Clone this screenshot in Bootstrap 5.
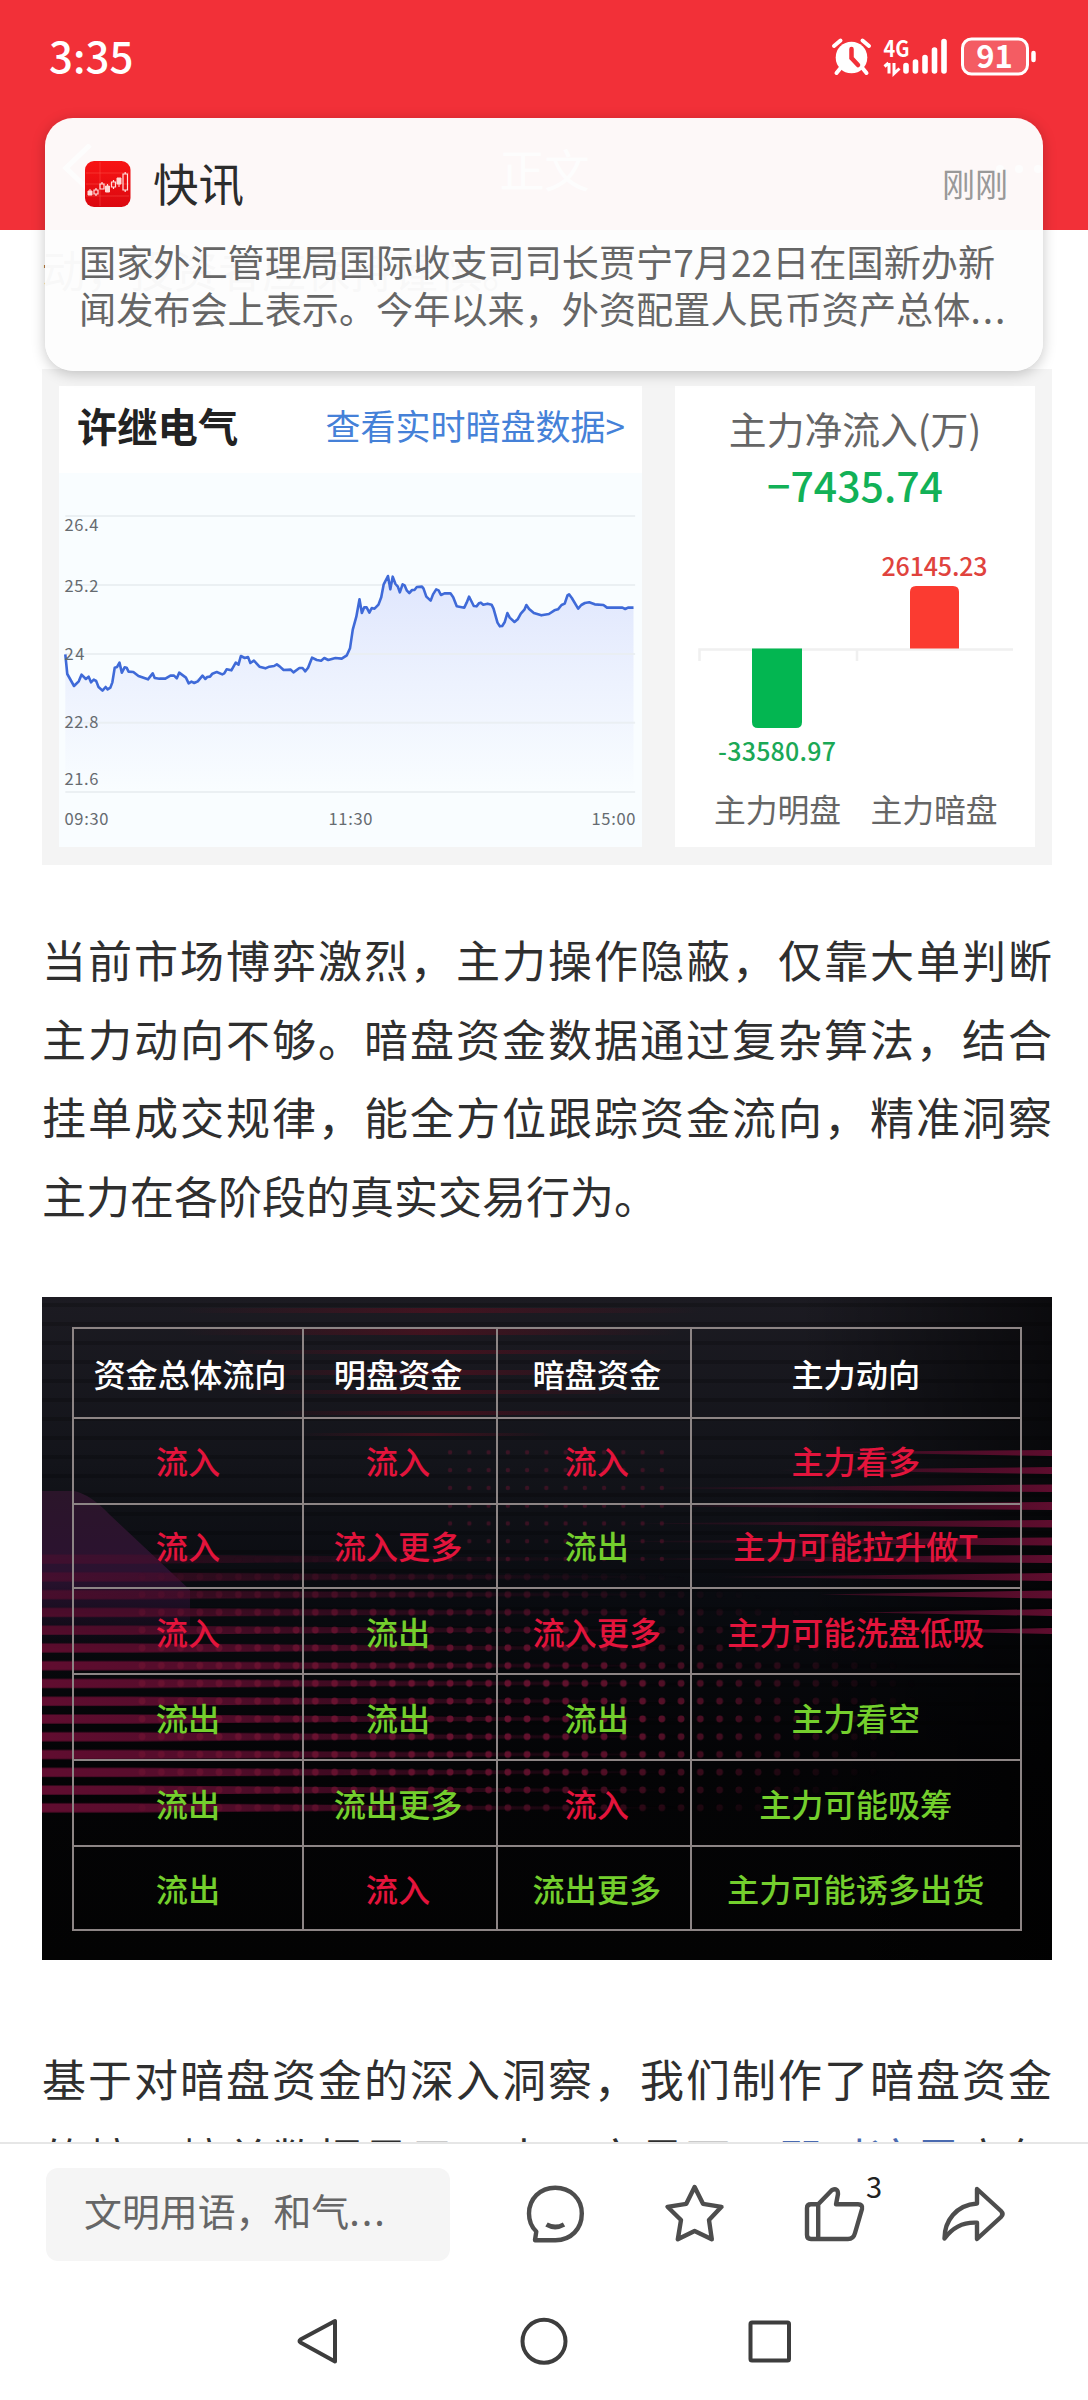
<!DOCTYPE html>
<html lang="zh-CN">
<head>
<meta charset="utf-8">
<meta name="viewport" content="width=device-width, initial-scale=1">
<title>正文</title>
<link rel="stylesheet" href="https://cdn.jsdelivr.net/npm/bootstrap@5.3.0/dist/css/bootstrap.min.css">
<script src="https://cdn.jsdelivr.net/npm/bootstrap@5.3.0/dist/js/bootstrap.bundle.min.js"></script>
<style>
body{font-family:"Noto Sans CJK SC",sans-serif;color:#333;background:#fff;margin:0}
.phone{width:1088px;height:2400px}
.topbar{height:230px;background:#f23038;color:#fff}
.status{height:115px;padding:0 51px 0 49px}
.clock{font-size:42px;font-weight:500;line-height:48px;padding-bottom:6px}
.titlebar{height:107px;padding:0 45px 0 60px}
.titlebar h1{font-size:45px;font-weight:400;line-height:50px;margin:0}
.notice{top:118px;left:45px;width:998px;height:253px;border-radius:28px;background:rgba(253,253,253,.975);box-shadow:0 3px 14px rgba(0,0,0,.22);padding:42px 35px 0 37px;z-index:5}
.notice-app{font-size:45.5px;line-height:48px;color:#2c2c2c;margin:-2px 0 2px 19px}
.notice-time{font-size:33px;line-height:40px;color:#999;margin-top:-3px}
.notice-text{font-size:37.15px;line-height:47px;color:#666;margin:30px 0 0 -3px;white-space:nowrap}
.dots3{letter-spacing:2px}
.article{height:1912px;padding:0 36px 0 42px}
.article p{font-size:44px;line-height:78.5px;text-align:justify;color:#2f2f2f;margin:0}
.article .lead-in{height:139px}
.stock{background:#f4f4f4;height:496px;padding:17px 17px 18px}
.pane{background:#fff;height:461px}
.trend{width:583px}
.flow{width:360px}
.trend-head{height:87px;padding:0 17px 8px 18px}
.stock-name{font-size:40.3px;font-weight:600;color:#222;line-height:1}
.stock-link{font-size:35px;color:#4581d8;text-decoration:none;line-height:1;padding-bottom:2px}
.flow-title{font-size:37.8px;line-height:44px;color:#666;padding-top:20px}
.flow-total{font-size:41px;line-height:46px;font-weight:500;color:#12b157;margin:11px 0 4px}
.article .para1{margin-top:55px}
.poster{height:663px;margin-top:63px;background:#06070a;padding:30px}
.poster table{width:950px;height:603px;table-layout:fixed;border-collapse:collapse;color:#fff;font-size:32.2px;font-weight:500;line-height:40px}
.poster td,.poster th{border:2px solid #8d8585;padding:0;text-align:center;vertical-align:middle;font-weight:500}
.poster tr:first-child>:first-child{padding-left:4px}
.poster tr:nth-child(2)>*,.poster tr:nth-child(3)>*{padding-bottom:3px}
.poster tr>:nth-child(2){padding-right:4px}
.poster tr>:nth-child(3){padding-left:6px}
.up{color:#e3143c}.down{color:#74cf2d}
.article .para2{margin-top:79px;text-align-last:justify}
.tag-link{color:#4a6ab0}
.actions{border-top:2px solid #e6e6e6;height:134px;padding:24px 0 0 46px;background:#fff}
.comment-box{width:404px;height:93px;border-radius:12px;background:#f5f5f5;color:#666;font-size:37.9px;line-height:84px;padding-left:38px}
.iconrow{width:638px;height:108px;margin-top:-16px}
.navkeys{height:124px;background:#fff}
svg{display:block}
svg text{font-family:"Noto Sans CJK SC",sans-serif}
</style>
</head>
<body>
<div class="phone position-relative overflow-hidden d-flex flex-column">
  <header class="topbar flex-shrink-0">
    <div class="status d-flex align-items-center justify-content-between">
      <span class="clock">3:35</span>
      <svg width="207" height="44" viewBox="828 35.500 207 44" fill="#fff">
        <circle cx="849.5" cy="57" r="15.8"/>
        <path d="M832 45.5l6.5-5.500M867 45.500l-6.500-5.500M839 67l-4.500 5.500M860 67l4.500 5.500" stroke="#fff" stroke-width="4" stroke-linecap="round"/>
        <path d="M849.500 48.500V57.500L856 64.500" stroke="#f23038" stroke-width="4.500" fill="none" stroke-linecap="round"/>
        <text x="881.500" y="56" font-size="22" font-weight="600" textLength="26" lengthAdjust="spacingAndGlyphs">4G</text>
        <path d="M882.500 66l4-3.500M887 73V62.500M892 62.500V73l5.500-5" stroke="#fff" stroke-width="3" fill="none"/>
        <path d="M904 65V70.500M913.500 61.500V70.500M923 57V70.500M932.500 49.500V70.500M942 41V70.500" stroke="#fff" stroke-width="5.600" stroke-linecap="round"/>
        <rect x="960.500" y="38.500" width="65" height="35" rx="9" fill="#f45c63" stroke="#fff" stroke-width="3"/>
        <path d="M1031.500 52.500V59.500" stroke="#fff" stroke-width="4.500" stroke-linecap="round"/>
        <text x="992.500" y="67.500" font-size="31" font-weight="700" text-anchor="middle">91</text>
      </svg>
    </div>
    <div class="titlebar d-flex align-items-center justify-content-between">
      <svg width="34" height="50" fill="none" stroke="#fff" stroke-width="5"><path d="M30 1L6 24L30 47"/></svg>
      <h1>正文</h1>
      <svg width="48" height="10" fill="#fff"><circle cx="5" cy="5" r="4"/><circle cx="24" cy="5" r="4"/><circle cx="43" cy="5" r="4"/></svg>
    </div>
  </header>

  <section class="notice position-absolute">
    <div class="d-flex align-items-center">
      <svg width="52" height="48" viewBox="-3 -1 52 48">
        <defs><linearGradient id="appred" x1="0" y1="0" x2="0" y2="1"><stop offset="0" stop-color="#f81414"/><stop offset="1" stop-color="#db0810"/></linearGradient></defs>
        <rect x="0" y="0" width="45.500" height="46" rx="9" fill="url(#appred)"/>
        <path d="M1 12H44M1 23H44M1 35H44M15 1V45" stroke="#ff5a50" stroke-opacity=".45" fill="none"/>
        <g fill="#ffd9d6" stroke="#ffd9d6" stroke-width="1"><path d="M3 30h4v4h-4zM5 28v2M20.500 25h4v6h-4zM22.500 23v2M32 17h4v6h-4zM34 23v3"/></g>
        <g fill="none" stroke="#ffe3e0" stroke-width="1.200"><path d="M9 29h4v4h-4zM11 27v2M11 33v2M15 23h4v5h-4zM17 21v2M26.500 21h4v5h-4zM28.500 19v2M28.500 26v2M38 13h4.500v16h-4.500zM40.200 11v2M40.200 29v2"/></g>
      </svg>
      <span class="notice-app">快讯</span>
      <span class="notice-time ms-auto">刚刚</span>
    </div>
    <div class="notice-text">国家外汇管理局国际收支司司长贾宁7月22日在国新办新<br>闻发布会上表示。今年以来，外资配置人民币资产总体<span class="dots3">...</span></div>
  </section>

  <main class="article overflow-hidden flex-shrink-0">
    <p class="lead-in">动，投资者应保持谨慎。</p>
    <section class="stock d-flex justify-content-between">
      <div class="pane trend">
        <div class="trend-head d-flex align-items-center justify-content-between">
          <span class="stock-name">许继电气</span>
          <a href="#" class="stock-link">查看实时暗盘数据&gt;</a>
        </div>
        <svg width="583" height="374" viewBox="59 473 583 374">
          <defs><linearGradient id="area" x1="0" y1="0" x2="0" y2="1"><stop offset="0" stop-color="#dfe6fd"/><stop offset=".5" stop-color="#edf2fe"/><stop offset="1" stop-color="#f9fdff"/></linearGradient></defs>
          <rect x="59" y="473" width="583" height="374" fill="#f9fdff"/>
          <g transform="translate(40 370) scale(.39541 .33333)">
            <path fill="url(#area)" d="M64 855L69 912L86 948L105 914L128 934L147 950L158 962L182 945L190 893L201 878L207 908L215 893L235 906L273 928L285 910L300 926L345 922L351 908L376 939L410 918L460 912L483 900L508 858L530 878L560 893L598 883L640 905L660 893L672 903L688 864L710 872L765 865L784 835L793 770L808 688L814 730L823 711L833 727L855 706L868 648L880 618L886 658L892 621L910 667L917 643L935 668L952 652L966 650L988 692L1001 658L1012 675L1038 670L1055 709L1073 713L1085 680L1100 709L1115 699L1142 706L1158 758L1170 768L1182 728L1200 756L1230 705L1250 729L1275 736L1308 720L1327 700L1337 673L1361 716L1385 697L1425 704L1434 713L1501 713V1262H64Z"/>
            <path fill="none" stroke="#e9edf1" stroke-opacity=".85" stroke-width="2" vector-effect="non-scaling-stroke" d="M64 438H1505M64 645H1505M64 852H1505M64 1058H1505M64 1266H1505"/>
            <path fill="none" stroke="#3f6ad8" stroke-width="2.600" stroke-linejoin="round" vector-effect="non-scaling-stroke" d="M64 853L69 912L86 948L98 934L105 914L116 927L123 920L129 937L136 929L142 933L148 951L158 962L166 951L171 958L178 953L183 937L189 893L195 891L201 878L207 908L214 892L219 893L224 905L236 906L249 918L273 928L285 910L290 924L302 926L317 926L330 917L339 917L346 925L352 908L369 923L376 940L383 935L390 939L399 934L411 917L418 927L423 921L430 920L436 911L447 906L461 913L466 910L472 898L484 901L495 878L502 884L508 858L518 864L526 861L532 879L541 872L555 890L570 895L580 890L592 888L599 883L606 889L616 900L634 899L641 907L656 894L664 894L671 904L678 893L688 863L700 870L711 872L719 864L729 870L747 864L763 866L776 856L784 835L791 779L800 740L808 688L814 729L820 712L826 712L833 728L839 714L846 716L856 704L863 682L869 644L880 618L886 658L892 620L899 642L905 650L910 667L917 643L922 646L928 662L934 669L941 660L947 660L953 651L966 650L970 656L977 680L988 692L994 673L1002 658L1008 661L1014 675L1023 670L1038 670L1045 682L1054 709L1073 713L1079 698L1085 680L1092 696L1097 708L1104 709L1110 700L1115 698L1121 704L1132 701L1142 704L1147 716L1157 758L1163 769L1169 768L1175 757L1182 729L1188 743L1200 756L1208 748L1216 731L1225 719L1230 705L1237 717L1249 729L1268 736L1287 732L1301 721L1310 718L1319 705L1327 701L1334 676L1338 673L1345 684L1361 716L1369 705L1378 699L1389 697L1403 703L1425 705L1434 713L1473 713L1480 717L1487 713L1501 713"/>
          </g>
          <g font-size="16.500" fill="#666b70">
            <text x="64.500" y="531" textLength="34">26.4</text><text x="64.500" y="591.500" textLength="34">25.2</text><text x="64.500" y="659.500" textLength="20">24</text><text x="64.500" y="728" textLength="34">22.8</text><text x="64.500" y="785" textLength="34">21.6</text>
            <text x="64.500" y="825" textLength="44">09:30</text><text x="328.500" y="825" textLength="44">11:30</text><text x="591.500" y="825" textLength="44">15:00</text>
          </g>
        </svg>
      </div>
      <div class="pane flow text-center">
        <div class="flow-title">主力净流入(万)</div>
        <div class="flow-total">−7435.74</div>
        <svg width="360" height="336" viewBox="675 511 360 336" text-anchor="middle">
          <path d="M699.500 661V649.500H1013M857 649.500V661" fill="none" stroke="#f0f0f0" stroke-width="2.500"/>
          <path d="M910 648.500V592q0-6 6-6h37q6 0 6 6v56.500z" fill="#fb3b31"/>
          <path d="M752 648.500h50V722q0 6-6 6h-38q-6 0-6-6z" fill="#03b651"/>
          <g font-size="25" font-weight="500">
            <text x="934.500" y="576" fill="#e0433d" textLength="106">26145.23</text>
            <text x="777" y="761" fill="#1ba856" textLength="118">-33580.97</text>
          </g>
          <g font-size="31.800" fill="#666"><text x="777.500" y="822">主力明盘</text><text x="934" y="822">主力暗盘</text></g>
        </svg>
      </div>
    </section>

    <p class="para1">当前市场博弈激烈，主力操作隐蔽，仅靠大单判断主力动向不够。暗盘资金数据通过复杂算法，结合挂单成交规律，能全方位跟踪资金流向，精准洞察主力在各阶段的真实交易行为。</p>

    <section class="poster position-relative">
      <svg class="position-absolute top-0 start-0" width="1010" height="663" viewBox="42 1297 1010 663">
        <defs>
          <linearGradient id="night" x1="0" y1="0" x2="0" y2="1"><stop offset="0" stop-color="#1c1b22"/><stop offset=".25" stop-color="#13141a"/><stop offset=".45" stop-color="#090b10"/><stop offset=".7" stop-color="#040406"/><stop offset="1" stop-color="#030303"/></linearGradient>
          <linearGradient id="edge" x1="0" y1="0" x2="1" y2="0"><stop offset=".75" stop-color="#000" stop-opacity="0"/><stop offset="1" stop-color="#000" stop-opacity=".6"/></linearGradient>
          <linearGradient id="fadeR"><stop offset="0" stop-color="#610d30"/><stop offset=".3" stop-color="#500c29"/><stop offset="1" stop-color="#500c29" stop-opacity="0"/></linearGradient>
          <linearGradient id="fadeL" gradientUnits="userSpaceOnUse" x1="600" y1="0" x2="1052" y2="0"><stop offset="0" stop-color="#5e0d2e" stop-opacity="0"/><stop offset="1" stop-color="#5e0d2e"/></linearGradient>
          <linearGradient id="glow"><stop offset="0" stop-color="#6b0c1e" stop-opacity="0"/><stop offset=".5" stop-color="#6b0c1e" stop-opacity=".5"/><stop offset="1" stop-color="#6b0c1e" stop-opacity="0"/></linearGradient>
          <linearGradient id="violet" x1="0" y1="0" x2="0" y2="1"><stop offset="0" stop-color="#2b152a"/><stop offset=".5" stop-color="#2b1230"/><stop offset="1" stop-color="#2b1035" stop-opacity="0"/></linearGradient>
          <pattern id="dots" x="132.500" y="1550.100" width="19.250" height="17.770" patternUnits="userSpaceOnUse"><circle cx="9.600" cy="8.900" r="3.400" fill="#6c1331"/></pattern>
          <pattern id="smalldots" x="132.500" y="1550.100" width="19.250" height="17.770" patternUnits="userSpaceOnUse"><circle cx="9.600" cy="8.900" r="2.200" fill="#6c1331"/></pattern>
          <pattern id="bars" x="42" y="1550.100" width="1010" height="17.770" patternUnits="userSpaceOnUse"><path d="M0 4.500H90L640 8.500V9.500L90 13.500H0z" fill="url(#fadeR)"/></pattern>
          <pattern id="darklines" x="42" y="1297" width="1010" height="19" patternUnits="userSpaceOnUse"><rect y="6" width="1010" height="4" fill="#000" opacity=".2"/></pattern>
          <radialGradient id="dotfade" cx=".38" cy=".6" r=".6"><stop offset="0" stop-color="#fff"/><stop offset=".5" stop-color="#ccc"/><stop offset="1" stop-color="#000"/></radialGradient>
          <mask id="dotmask"><rect x="42" y="1550" width="900" height="268" fill="url(#dotfade)"/></mask>
          <linearGradient id="rise" x1="0" y1="0" x2="0" y2="1"><stop offset="0" stop-color="#555"/><stop offset=".4" stop-color="#fff"/></linearGradient>
          <mask id="barmask"><rect x="42" y="1550" width="700" height="268" fill="url(#rise)"/></mask>
        </defs>
        <rect x="42" y="1297" width="1010" height="663" fill="url(#night)"/>
        <rect x="42" y="1297" width="1010" height="430" fill="url(#darklines)"/>
        <rect x="42" y="1297" width="1010" height="663" fill="url(#edge)"/>
        <g fill="url(#glow)"><rect x="180" y="1308" width="520" height="5"/><rect x="180" y="1328" width="500" height="7"/><rect x="230" y="1350" width="440" height="4"/><rect x="230" y="1370" width="420" height="5"/><rect x="240" y="1390" width="400" height="4"/><rect x="270" y="1411" width="350" height="4"/><rect x="300" y="1433" width="250" height="3"/></g>
        <path d="M42 1491H74Q90 1494 110 1515L190 1590V1650H42z" fill="url(#violet)"/>
        <g mask="url(#barmask)"><rect x="42" y="1550.100" width="700" height="266.500" fill="url(#bars)"/></g>
        <g mask="url(#dotmask)"><rect x="132.500" y="1550.100" width="800" height="266.500" fill="url(#dots)"/></g>
        <rect x="440" y="1443.500" width="230" height="124" fill="url(#smalldots)" opacity=".45"/>
        <g fill="url(#fadeL)">
          <path d="M820 1452L1052 1450V1456zM780 1470L1052 1467V1474zM640 1488L1052 1484.500V1492zM640 1506L1052 1502V1510zM620 1523.500L1052 1520V1527.500zM590 1541.500L1052 1537.500V1545.500zM590 1559L1052 1555V1563zM720 1577L1052 1573V1581zM820 1594.500L1052 1590.500V1598.500zM860 1612.500L1052 1609V1616zM900 1631L1052 1628V1634z"/>
        </g>
      </svg>
      <table class="position-relative">
        <colgroup><col style="width:230px"><col style="width:194px"><col style="width:193.500px"><col></colgroup>
        <tr style="height:90px"><th>资金总体流向</th><th>明盘资金</th><th>暗盘资金</th><th>主力动向</th></tr>
        <tr style="height:86px"><td class="up">流入</td><td class="up">流入</td><td class="up">流入</td><td class="up">主力看多</td></tr>
        <tr style="height:84px"><td class="up">流入</td><td class="up">流入更多</td><td class="down">流出</td><td class="up">主力可能拉升做T</td></tr>
        <tr style="height:86px"><td class="up">流入</td><td class="down">流出</td><td class="up">流入更多</td><td class="up">主力可能洗盘低吸</td></tr>
        <tr style="height:86px"><td class="down">流出</td><td class="down">流出</td><td class="down">流出</td><td class="down">主力看空</td></tr>
        <tr style="height:86px"><td class="down">流出</td><td class="down">流出更多</td><td class="up">流入</td><td class="down">主力可能吸筹</td></tr>
        <tr style="height:84px"><td class="down">流出</td><td class="up">流入</td><td class="down">流出更多</td><td class="down">主力可能诱多出货</td></tr>
      </table>
    </section>

    <p class="para2">基于对暗盘资金的深入洞察，我们制作了暗盘资金的榜，榜单数据显示，中，实易可，<span class="tag-link">即时这里</span>立每</p>
  </main>

  <div class="actions d-flex flex-shrink-0 position-relative">
    <div class="comment-box">文明用语，和气<span class="dots3">...</span></div>
    <svg class="iconrow" viewBox="450 2152 638 108" fill="none" stroke="#4d4d4d" stroke-width="4.400" stroke-linejoin="round" stroke-linecap="round">
      <path d="M535 2240.200H555.500C571 2240.200 581.800 2229 581.800 2213.500C581.800 2198.500 570.500 2187.700 555.200 2187.700C540 2187.700 529 2199 529 2213.500C529 2220.500 531.500 2227 536.300 2231.500Z"/>
      <path d="M546.500 2224.500Q555.100 2229.500 564 2224.500" stroke-linecap="butt" stroke-width="4.800"/>
      <path d="M694.600 2187L703 2203.800L721.500 2206.800L709 2220L711.800 2239.300L694.600 2231L677.800 2239.300L681 2220L667.500 2206.800L686.300 2203.800Z"/>
      <path d="M818.200 2204.300H811Q807 2204.300 807 2208V2235Q807 2239 811 2239H848Q853.500 2239 855 2233L862 2209Q863 2204.300 858 2204.300H836L838 2194Q838 2187.500 832 2190L818.200 2204.300V2239"/>
      <path d="M977 2189L1001 2211Q1004 2214 1001 2217L977 2239V2222.700Q957 2221.500 944.500 2238.500C944.500 2221 956 2205 977 2203.500Z"/>
      <text x="874" y="2198" font-size="29" fill="#222" stroke="none" text-anchor="middle">3</text>
    </svg>
  </div>
  <nav class="navkeys d-flex justify-content-center flex-shrink-0">
    <svg width="500" height="124" viewBox="294 2276 500 124" fill="none" stroke="#3d3d3d" stroke-width="4" stroke-linejoin="round">
      <path d="M335 2321V2361.500L300.500 2342.500Q298.500 2341 300.500 2339.500Z"/>
      <circle cx="544" cy="2341.300" r="21.500"/>
      <rect x="750.500" y="2322.500" width="38.500" height="38" rx="1.500"/>
    </svg>
  </nav>
</div>
</body>
</html>
